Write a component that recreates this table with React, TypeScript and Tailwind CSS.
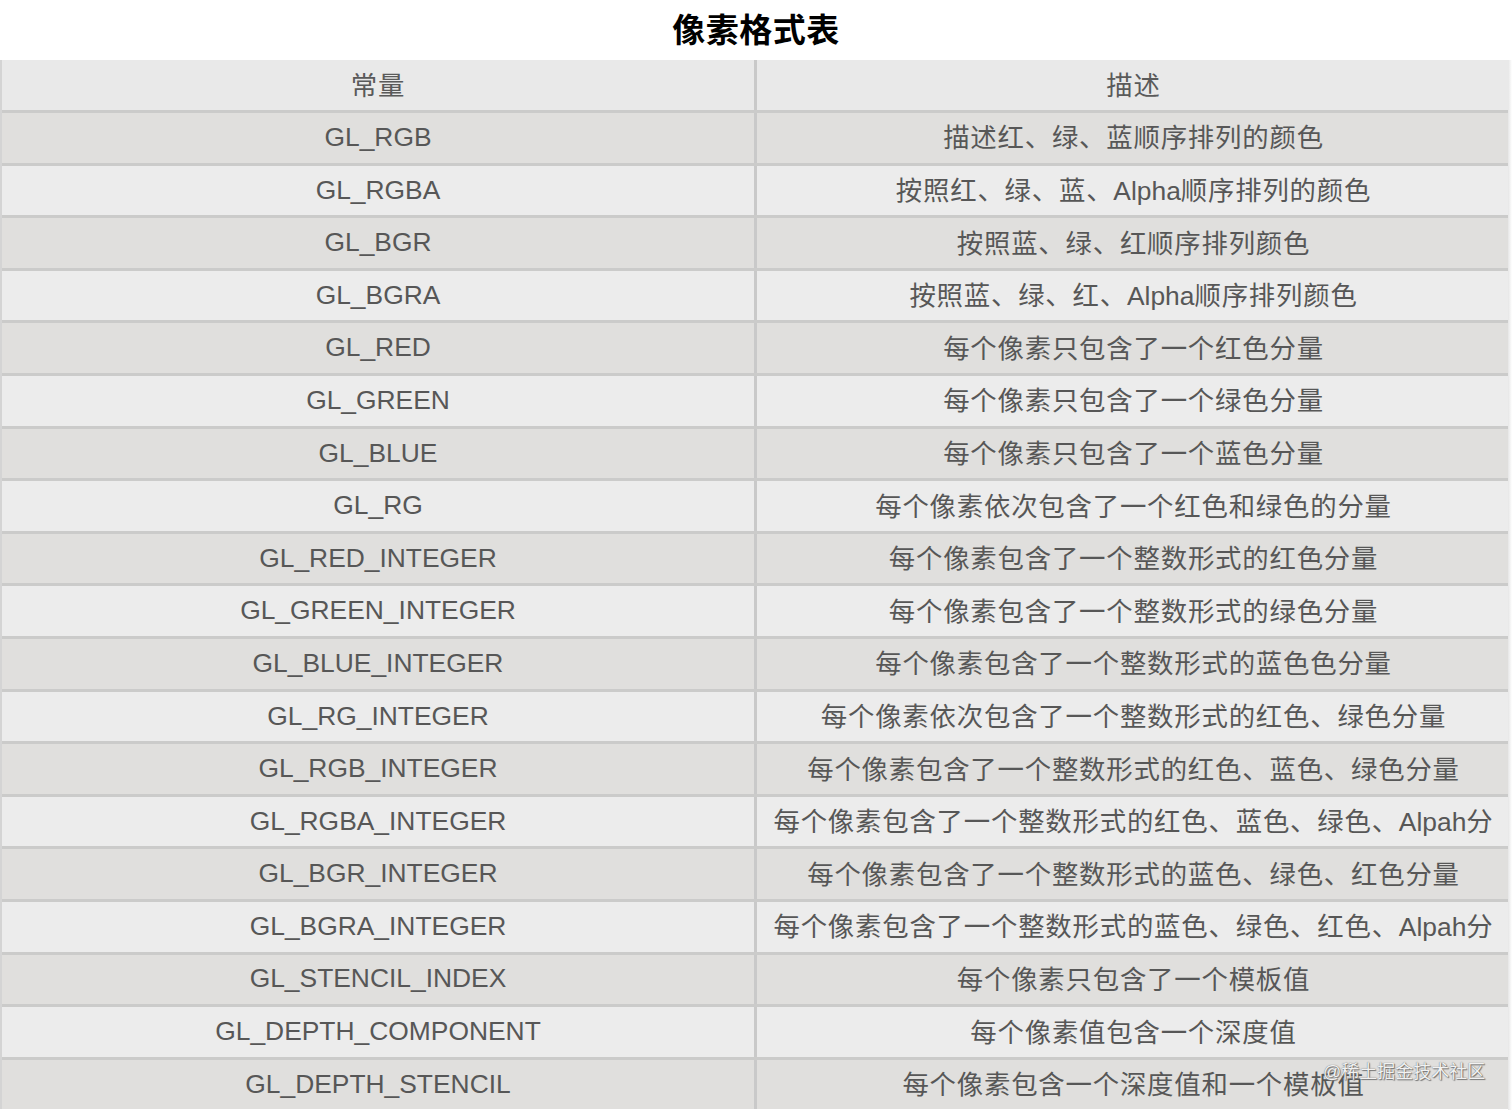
import React from "react";

const rows: [string, string][] = [
  ["GL_RGB", "描述红、绿、蓝顺序排列的颜色"],
  ["GL_RGBA", "按照红、绿、蓝、Alpha顺序排列的颜色"],
  ["GL_BGR", "按照蓝、绿、红顺序排列颜色"],
  ["GL_BGRA", "按照蓝、绿、红、Alpha顺序排列颜色"],
  ["GL_RED", "每个像素只包含了一个红色分量"],
  ["GL_GREEN", "每个像素只包含了一个绿色分量"],
  ["GL_BLUE", "每个像素只包含了一个蓝色分量"],
  ["GL_RG", "每个像素依次包含了一个红色和绿色的分量"],
  ["GL_RED_INTEGER", "每个像素包含了一个整数形式的红色分量"],
  ["GL_GREEN_INTEGER", "每个像素包含了一个整数形式的绿色分量"],
  ["GL_BLUE_INTEGER", "每个像素包含了一个整数形式的蓝色色分量"],
  ["GL_RG_INTEGER", "每个像素依次包含了一个整数形式的红色、绿色分量"],
  ["GL_RGB_INTEGER", "每个像素包含了一个整数形式的红色、蓝色、绿色分量"],
  ["GL_RGBA_INTEGER", "每个像素包含了一个整数形式的红色、蓝色、绿色、Alpah分"],
  ["GL_BGR_INTEGER", "每个像素包含了一个整数形式的蓝色、绿色、红色分量"],
  ["GL_BGRA_INTEGER", "每个像素包含了一个整数形式的蓝色、绿色、红色、Alpah分"],
  ["GL_STENCIL_INDEX", "每个像素只包含了一个模板值"],
  ["GL_DEPTH_COMPONENT", "每个像素值包含一个深度值"],
  ["GL_DEPTH_STENCIL", "每个像素包含一个深度值和一个模板值"],
];

function Mixed({ text }: { text: string }) {
  const parts = text.match(/[\u3000-\u9fff\uff00-\uffef]+|[^\u3000-\u9fff\uff00-\uffef]+/g) || [];
  return (
    <>
      {parts.map((p, i) =>
        /[\u3000-\u9fff]/.test(p) ? (
          <span key={i} className="tracking-[0.8px]">
            {p}
          </span>
        ) : (
          <span key={i}>{p}</span>
        )
      )}
    </>
  );
}

const font = {
  fontFamily: '"Liberation Sans", "Noto Sans CJK SC", sans-serif',
};

export default function App() {
  return (
    <div className="w-[1512px] h-[1110px] overflow-hidden bg-white relative" style={font}>
      <div className="h-[60px] flex items-center justify-center">
        <h1 className="text-[33px] font-bold text-black leading-none tracking-[0.5px]">像素格式表</h1>
      </div>
      <div className="w-[1510px] bg-[#e4e4e3] border-l-2 border-[#d4d4d4]">
        <div className="grid grid-cols-[755px_1fr] h-[50px] bg-[#e9e9e9] text-[26.4px] text-[#5a5a5a]">
          <div className="flex items-center justify-center border-r-[3px] border-[#c9c9c9] pt-[4px]">
            <Mixed text="常量" />
          </div>
          <div className="flex items-center justify-center pt-[4px]">
            <Mixed text="描述" />
          </div>
        </div>
        {rows.map(([a, b], i) => (
          <div
            key={a}
            className={
              "grid grid-cols-[755px_1fr] h-[52.6px] border-t-[3px] border-[#cbcbca] text-[26.4px] text-[#575757] " +
              (i % 2 === 0 ? "bg-[#e0dfdd]" : "bg-[#ececec]")
            }
          >
            <div className="flex items-center justify-center border-r-[3px] border-[#c9c9c9] whitespace-nowrap">
              <Mixed text={a} />
            </div>
            <div className="flex items-center justify-center whitespace-nowrap pt-[3px]">
              <Mixed text={b} />
            </div>
          </div>
        ))}
      </div>
      <div className="absolute right-0 top-[60px] bottom-0 w-[4px] bg-gradient-to-r from-[#e6e6e6] to-white" />
      <div
        className="absolute left-[1323px] top-[1059px] text-[18px] text-[#f2f2f2] whitespace-nowrap"
        style={{ textShadow: "0 0 1px #555, 1px 1px 1px #777", ...font }}
      >
        @稀土掘金技术社区
      </div>
    </div>
  );
}
